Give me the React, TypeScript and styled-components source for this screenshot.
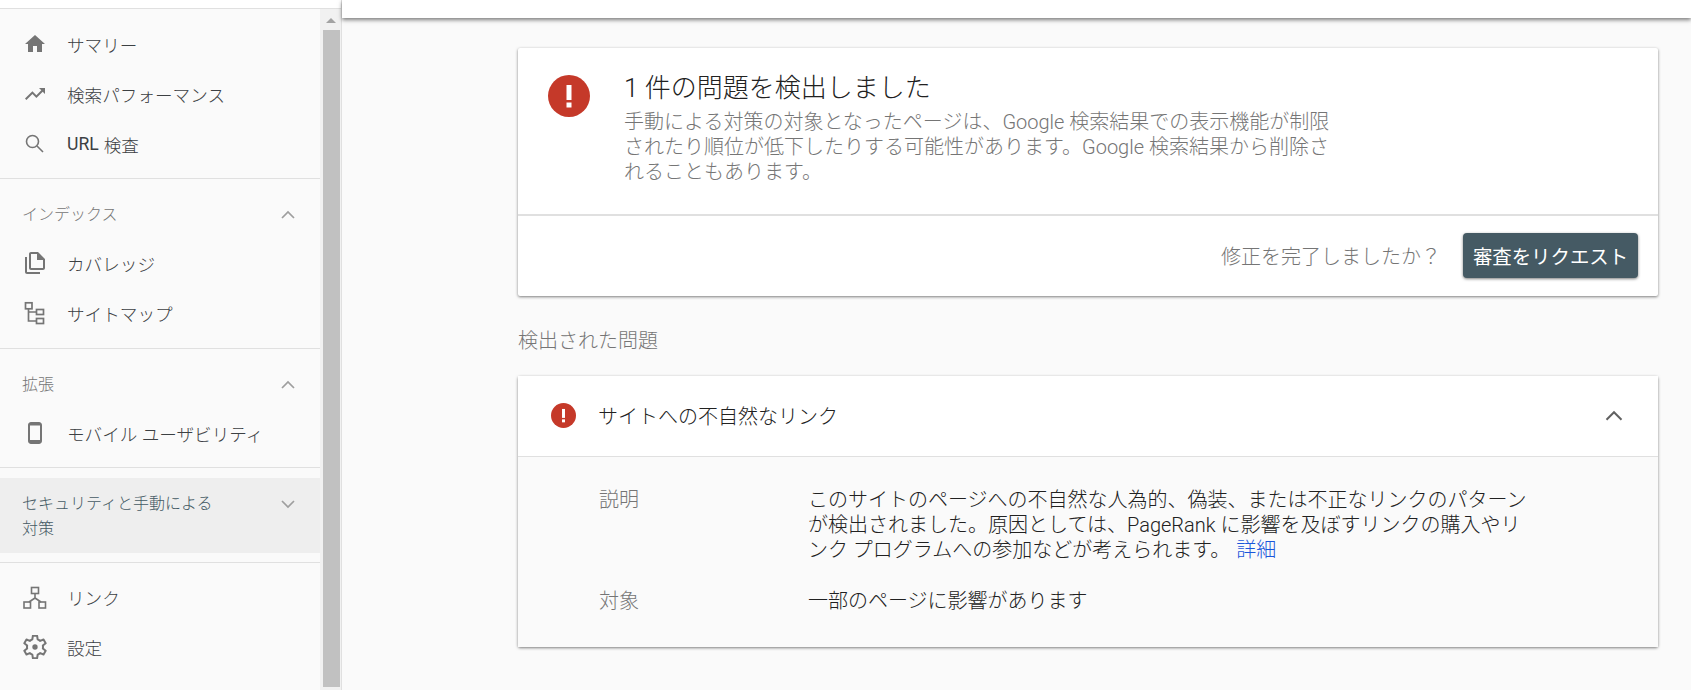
import React from "react";
import styled, { createGlobalStyle } from "styled-components";

const Global = createGlobalStyle`
  html, body { margin: 0; height: 100%; overflow: hidden; background: #fafafa; }
  body { font-family: Roboto, "Noto Sans CJK JP", sans-serif; font-size: 17.6px; color: #3c4043; }
  * { box-sizing: border-box; }
`;

const Page = styled.div`display: flex; width: 1691px; height: 690px; overflow: hidden; background: #fafafa;`;
const Sidebar = styled.aside`display: flex; flex-direction: column; flex: none; width: 342px; height: 690px; border-right: 1px solid #e0e0e0;`;
const SideTop = styled.div`height: 9px; flex: none; background: #fff; border-bottom: 1px solid #e0e0e0;`;
const SideBody = styled.div`flex: 1; min-height: 0; display: flex;`;
const Nav = styled.nav`width: 320px; flex: none; padding-top: 10px;`;
const Scrollbar = styled.div`width: 21px; flex: none; display: flex; flex-direction: column; align-items: center; background: #f1f1f1; padding-left: 1px;`;
const ScrollArrow = styled.div`height: 21px; padding-top: 9px; flex: none;
  &::before { content: ""; display: block; width: 0; height: 0; border-left: 5px solid transparent; border-right: 5px solid transparent; border-bottom: 5px solid #a3a3a3; }`;
const ScrollThumb = styled.div`width: 17px; height: 657px; background: #c1c1c1;`;

const Divider = styled.div<{ $gap: number; $top?: number }>`height: 1px; background: #e0e0e0; margin: ${p => p.$top ?? 0}px 0 ${p => p.$gap}px;`;
const Group = styled.div<{ $bottom?: number }>`padding: 0 0 ${p => p.$bottom ?? 0}px;`;
const Row = styled.div`height: 50px; display: flex; align-items: center; padding-left: 23px; color: #3c4043; font-weight: 300; white-space: nowrap;`;
const Latin = styled.span`font-weight: 400; margin-right: 5px;`;
const IconSlot = styled.span`width: 44px; flex: none; display: flex; color: #757575;`;
const GroupHead = styled.div<{ $active?: boolean }>`
  display: flex; justify-content: space-between; align-items: flex-start;
  padding: ${p => (p.$active ? "13px 20px 10px 22px" : "0 20px 11px 22px")};
  height: ${p => (p.$active ? "75px" : "auto")};
  background: ${p => (p.$active ? "#eeeeee" : "transparent")};
  color: ${p => (p.$active ? "#455a64" : "#757575")};
  font-size: 16px; font-weight: 300; line-height: 25px;
`;
const HeadLabel = styled.span`width: 205px;`;
const Chevron = styled.span<{ $dark?: boolean }>`display: flex; color: ${p => (p.$dark ? "#616161" : "#9e9e9e")}; margin-top: 1px;`;

const Main = styled.main`flex: 1; min-width: 0; display: flex; flex-direction: column;`;
const TopBar = styled.div`height: 18px; flex: none; background: #fff; box-shadow: 0 2px 4px rgba(0,0,0,.5);`;
const Content = styled.div`width: 1140px; margin-left: 176px; padding-top: 30px;`;
const Card = styled.section`background: #fff; border-radius: 2px; box-shadow: 0 1px 3px rgba(0,0,0,.5);`;
const Summary = styled.div`height: 168px; display: flex; padding: 25px 0 0 30px; border-bottom: 2px solid #e0e0e0;`;
const AlertSlot = styled.div`width: 76px; flex: none; padding-top: 2px;`;
const SummaryText = styled.div`width: 715px;`;
const Title = styled.h1`margin: 0 0 7px; font-size: 26px; font-weight: 300; line-height: 30px; color: #212121;`;
const Description = styled.p`margin: 0; font-size: 20px; font-weight: 300; line-height: 25px; color: #757575;`;
const Actions = styled.div`height: 80px; display: flex; align-items: center; justify-content: flex-end; gap: 22px; padding: 0 20px 1px 0;`;
const Question = styled.span`font-size: 20px; font-weight: 300; color: #757575;`;
const Primary = styled.button`height: 45px; width: 175px; padding: 0; border: 0; border-radius: 4px; background: #455a64; color: #fff; font: inherit; font-size: 19.4px; font-weight: 400; box-shadow: 0 1px 3px rgba(0,0,0,.5);`;
const SectionTitle = styled.h2`margin: 0; height: 80px; padding-top: 33px; font-size: 20px; font-weight: 300; line-height: 25px; color: #757575;`;
const IssueHead = styled.div`height: 81px; display: flex; align-items: center; padding: 0 29px 2px 33px; border-bottom: 1px solid #e0e0e0; background: #fff;`;
const IssueTitle = styled.span`flex: 1; margin-left: 22px; font-size: 20px; font-weight: 300; color: #212121;`;
const IssueBody = styled.div`background: #fafafa; padding: 31px 0 33px 81px; display: grid; grid-template-columns: 209px 725px; row-gap: 26px;`;
const Term = styled.div`font-size: 20px; font-weight: 300; line-height: 25px; color: #757575;`;
const Detail = styled.div`font-size: 20px; font-weight: 300; line-height: 25px; color: #212121;`;
const DocLink = styled.a`color: #1a56db; text-decoration: none; margin-left: 6px;`;

const svg = (size: number, d: React.ReactNode) => (
  <svg width={size} height={size} viewBox="0 0 24 24" fill="currentColor" aria-hidden>{d}</svg>
);
const line = (d: React.ReactNode, sw = 1.7) => (
  <svg width={24} height={24} viewBox="0 0 24 24" fill="none" stroke="currentColor" strokeWidth={sw} aria-hidden>{d}</svg>
);
const Home = () => svg(24, <path d="M10 20v-6h4v6h5v-8h3L12 3 2 12h3v8z" />);
const Trend = () => svg(24, <path d="M16 6l2.29 2.29-4.88 4.88-4-4L2 16.59 3.41 18l6-6 4 4 6.3-6.29L22 12V6z" />);
const Search = () => line(<><circle cx="9.5" cy="9.5" r="6" /><path d="M14 14l6 6" /></>, 1.6);
const Copy = () => svg(24, <path d="M4 6H2v15c0 1.1.9 2 2 2h13v-2H4V6zm11-5H8c-1.1 0-2 .9-2 2v14c0 1.1.9 2 2 2h12c1.1 0 2-.9 2-2V8l-7-7zm5 16H8V3h6v6h6v8z" />);
const Sitemap = () => line(<><rect x="2.5" y="1.8" width="6.5" height="6" /><rect x="13.5" y="8.5" width="7" height="5" /><rect x="13.5" y="17.5" width="7" height="5" /><path d="M5.5 8v12h8M5.5 11h8" /></>);
const Phone = () => svg(24, <path d="M16 1H8C6.34 1 5 2.34 5 4v16c0 1.66 1.34 3 3 3h8c1.66 0 3-1.34 3-3V4c0-1.66-1.34-3-3-3zm1 18H7V4.5h10V19z" />);
const LinkTree = () => line(<><rect x="8.5" y="2.5" width="7" height="6" /><rect x="1" y="17" width="6.5" height="6" /><rect x="16" y="17" width="6.5" height="6" /><path d="M12 8.5V13L6 17M12 13l6 4" /></>, 1.6);
const Gear = () => (
  <svg width={24} height={24} viewBox="3 3 18 18" fill="none" stroke="currentColor" strokeWidth="1.5" strokeLinejoin="round" aria-hidden>
    <path d="M13.6 2.6h-3.2l-.4 2.7c-.7.3-1.3.6-1.9 1.1L5.6 5.4 4 8.2l2.1 1.7a7 7 0 0 0 0 2.2L4 13.8l1.6 2.8 2.5-1c.6.5 1.2.8 1.9 1.1l.4 2.7h3.2l.4-2.7c.7-.3 1.3-.6 1.9-1.1l2.5 1 1.6-2.8-2.1-1.7a7 7 0 0 0 0-2.2L20 8.2l-1.6-2.8-2.5 1c-.6-.5-1.2-.8-1.9-1.1z" transform="translate(0 1)" />
    <circle cx="12" cy="12" r="2" fill="currentColor" stroke="none" />
  </svg>
);
const Caret = ({ size, up, width }: { size: number; up: boolean; width: number }) => (
  <svg width={size} height={size} viewBox="0 0 24 24" fill="none" stroke="currentColor" strokeWidth={width} aria-hidden>
    <path d={up ? "M6 15l6-6 6 6" : "M6 9l6 6 6-6"} />
  </svg>
);
const Alert = ({ size }: { size: number }) => (
  <svg width={size} height={size} viewBox="0 0 42 42" aria-hidden>
    <circle cx="21" cy="21" r="21" fill="#c53929" />
    <rect x="18.5" y="10" width="5" height="15" fill="#fff" />
    <rect x="18.5" y="27.5" width="5" height="5" fill="#fff" />
  </svg>
);

export default function App() {
  return (
    <Page>
      <Global />
      <Sidebar>
        <SideTop />
        <SideBody>
          <Nav>
            <Group $bottom={9}>
              <Row><IconSlot><Home /></IconSlot>サマリー</Row>
              <Row><IconSlot><Trend /></IconSlot>検索パフォーマンス</Row>
              <Row><IconSlot><Search /></IconSlot><Latin>URL</Latin>検査</Row>
            </Group>
            <Divider $gap={23} />
            <Group $bottom={10}>
              <GroupHead><HeadLabel>インデックス</HeadLabel><Chevron><Caret size={24} up width={1.7} /></Chevron></GroupHead>
              <Row><IconSlot><Copy /></IconSlot>カバレッジ</Row>
              <Row><IconSlot><Sitemap /></IconSlot>サイトマップ</Row>
            </Group>
            <Divider $gap={23} />
            <Group $bottom={9}>
              <GroupHead><HeadLabel>拡張</HeadLabel><Chevron><Caret size={24} up width={1.7} /></Chevron></GroupHead>
              <Row><IconSlot><Phone /></IconSlot>モバイル ユーザビリティ</Row>
            </Group>
            <Divider $gap={10} />
            <GroupHead $active><HeadLabel>セキュリティと手動による対策</HeadLabel><Chevron><Caret size={24} up={false} width={1.7} /></Chevron></GroupHead>
            <Divider $top={9} $gap={9} />
            <Group>
              <Row><IconSlot><LinkTree /></IconSlot>リンク</Row>
              <Row><IconSlot><Gear /></IconSlot>設定</Row>
            </Group>
          </Nav>
          <Scrollbar>
            <ScrollArrow />
            <ScrollThumb />
          </Scrollbar>
        </SideBody>
      </Sidebar>
      <Main>
        <TopBar />
        <Content>
          <Card>
            <Summary>
              <AlertSlot><Alert size={42} /></AlertSlot>
              <SummaryText>
                <Title>1 件の問題を検出しました</Title>
                <Description>手動による対策の対象となったページは、Google 検索結果での表示機能が制限されたり順位が低下したりする可能性があります。Google 検索結果から削除されることもあります。</Description>
              </SummaryText>
            </Summary>
            <Actions>
              <Question>修正を完了しましたか？</Question>
              <Primary>審査をリクエスト</Primary>
            </Actions>
          </Card>
          <SectionTitle>検出された問題</SectionTitle>
          <Card>
            <IssueHead>
              <Alert size={25} />
              <IssueTitle>サイトへの不自然なリンク</IssueTitle>
              <Chevron $dark><Caret size={30} up width={1.6} /></Chevron>
            </IssueHead>
            <IssueBody>
              <Term>説明</Term>
              <Detail>このサイトのページへの不自然な人為的、偽装、または不正なリンクのパターンが検出されました。原因としては、PageRank に影響を及ぼすリンクの購入やリンク プログラムへの参加などが考えられます。<DocLink>詳細</DocLink></Detail>
              <Term>対象</Term>
              <Detail>一部のページに影響があります</Detail>
            </IssueBody>
          </Card>
        </Content>
      </Main>
    </Page>
  );
}
